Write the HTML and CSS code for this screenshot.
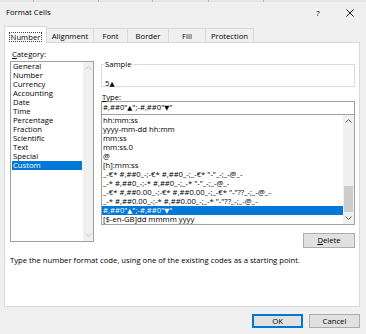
FILE: index.html
```html
<!DOCTYPE html>
<html lang="en">
<head>
  <meta charset="UTF-8">
  <meta name="viewport" content="width=device-width, initial-scale=1.0">
  <title>Format Cells</title>
  <link rel="stylesheet" href="styles.css">
</head>
<body>

<div class="strip"></div>

<div class="titlebar">
  <span class="title">Format Cells</span>
  <span class="help">?</span>
  <span class="close">
    <svg width="8" height="8" viewBox="0 0 8 8"><path d="M0.5 0.5L7.5 7.5M7.5 0.5L0.5 7.5" stroke="#000" stroke-width="0.9" fill="none"/></svg>
  </span>
</div>

<!-- Tabs -->
<div class="tabs">
  <div class="tab tab-active"><span class="focus">Number</span></div>
  <div class="tab tab-align">Alignment</div>
  <div class="tab tab-font">Font</div>
  <div class="tab tab-border">Border</div>
  <div class="tab tab-fill">Fill</div>
  <div class="tab tab-prot">Protection</div>
</div>

<div class="panel">
  <div class="panel-cols">

    <!-- Category list -->
    <div class="col-left">
      <div class="label"><u>C</u>ategory:</div>
      <div class="listbox listbox-cat">
        <ul class="items">
          <li>General</li>
          <li>Number</li>
          <li>Currency</li>
          <li>Accounting</li>
          <li>Date</li>
          <li>Time</li>
          <li>Percentage</li>
          <li>Fraction</li>
          <li>Scientific</li>
          <li>Text</li>
          <li>Special</li>
          <li class="selected">Custom</li>
        </ul>
        <div class="vscroll vscroll-off">
          <div class="arrow"><svg width="7" height="4" viewBox="0 0 7 4"><path d="M0.5 3.5L3.5 0.5L6.5 3.5" fill="none" stroke="#c4c4c4"/></svg></div>
          <div class="track"></div>
          <div class="arrow"><svg width="7" height="4" viewBox="0 0 7 4"><path d="M0.5 0.5L3.5 3.5L6.5 0.5" fill="none" stroke="#c4c4c4"/></svg></div>
        </div>
      </div>
    </div>

    <!-- Sample, type and format list -->
    <div class="col-right">
      <div class="sample">
        <span class="legend">Sample</span>
        <div class="sample-val">5<span class="tri">▲</span></div>
      </div>

      <div class="label label-type"><u>T</u>ype:</div>
      <div class="typebox">#,##0"<span class="tri">▲</span>";-#,##0"<span class="tri">▼</span>"</div>

      <div class="listbox listbox-fmt">
        <ul class="items">
          <li>hh:mm:ss</li>
          <li>yyyy-mm-dd hh:mm</li>
          <li>mm:ss</li>
          <li>mm:ss.0</li>
          <li>@</li>
          <li>[h]:mm:ss</li>
          <li>_-€* #,##0_-;-€* #,##0_-;_-€* "-"_-;_-@_-</li>
          <li>_-* #,##0_-;-* #,##0_-;_-* "-"_-;_-@_-</li>
          <li>_-€* #,##0.00_-;-€* #,##0.00_-;_-€* "-"??_-;_-@_-</li>
          <li>_-* #,##0.00_-;-* #,##0.00_-;_-* "-"??_-;_-@_-</li>
          <li class="selected">#,##0"<span class="tri">▲</span>";-#,##0"<span class="tri">▼</span>"</li>
          <li>[$-en-GB]dd mmmm yyyy</li>
        </ul>
        <div class="vscroll">
          <div class="arrow"><svg width="7" height="4" viewBox="0 0 7 4"><path d="M0.5 3.5L3.5 0.5L6.5 3.5" fill="none" stroke="#606060"/></svg></div>
          <div class="track"><div class="thumb"></div></div>
          <div class="arrow"><svg width="7" height="4" viewBox="0 0 7 4"><path d="M0.5 0.5L3.5 3.5L6.5 0.5" fill="none" stroke="#606060"/></svg></div>
        </div>
      </div>

      <div class="row-end">
        <button class="btn btn-delete"><u>D</u>elete</button>
      </div>
    </div>

  </div>

  <p class="hint">Type the number format code, using one of the existing codes as a starting point.</p>
</div>

<div class="footer">
  <button class="btn btn-default">OK</button>
  <button class="btn">Cancel</button>
</div>

</body>
</html>
```

FILE: styles.css
```css
* {
  box-sizing: border-box;
}
body {
  margin: 0;
  width: 366px;
  height: 334px;
  overflow: hidden;
  background-color: #f0f0f0;
  font-family: "Open Sans", "DejaVu Sans", sans-serif;
  font-size: 7.7px;
  line-height: 9px;
  color: #000;
}
u {
  text-decoration: underline;
  text-underline-offset: 1px;
}
.tri {
  font-size: 6.5px;
}

/* sheet behind the dialog, peeking at the top */
.strip {
  height: 2px;
  background:
    linear-gradient(#b8b8b8, #b8b8b8) 33px 0 / 1px 2px no-repeat,
    linear-gradient(#b8b8b8, #b8b8b8) 98px 0 / 1px 2px no-repeat,
    linear-gradient(#b8b8b8, #b8b8b8) 152px 0 / 1px 2px no-repeat,
    linear-gradient(#b8b8b8, #b8b8b8) 208px 0 / 1px 2px no-repeat,
    linear-gradient(#b8b8b8, #b8b8b8) 263px 0 / 1px 2px no-repeat,
    #e6e6e6;
}

.titlebar {
  display: flex;
  align-items: center;
  height: 24px;
  padding: 0 9px 3px 6px;
}
.title {
  flex: 1;
}
.help {
  width: 14px;
  text-align: center;
  font-size: 8px;
}
.close {
  width: 14px;
  margin-left: 18px;
  display: flex;
  justify-content: center;
}

/* tabs */
.tabs {
  display: flex;
  align-items: flex-end;
  height: 17px;
  margin: 0 0 -1px 4px;
  position: relative;
  z-index: 1;
}
.tab {
  height: 15px;
  margin-left: -1px;
  border: 1px solid #d9d9d9;
  background-color: #f0f0f0;
  display: flex;
  justify-content: center;
  align-items: flex-end;
  padding-bottom: 1px;
}
.tab-active {
  width: 43px;
  height: 17px;
  margin-left: 0;
  border-bottom: none;
  background-color: #fff;
  padding-bottom: 1px;
}
.focus {
  border: 1px dotted #444;
  line-height: 8px;
  padding: 0 1px;
}
.tab-align { width: 48px; }
.tab-font { width: 35px; }
.tab-border { width: 42px; }
.tab-fill { width: 38px; }
.tab-prot { width: 49px; }

/* page */
.panel {
  height: 265px;
  margin: 0 6px 0 4px;
  background-color: #fff;
  border: 1px solid #d9d9d9;
}
.panel-cols {
  display: flex;
  padding: 7px 0 0 5px;
}
.col-left {
  width: 84px;
}
.col-right {
  width: 254px;
  margin-left: 7px;
}
.label {
  height: 9px;
  padding-left: 2px;
}

.listbox {
  display: flex;
  border: 1px solid #a0a0a0;
  background-color: #fff;
}
.listbox-cat {
  height: 181px;
  margin-top: 2px;
}
.listbox-fmt {
  height: 111px;
  margin-top: -1px;
}
.items {
  flex: 1;
  list-style: none;
  margin: 0;
  padding: 0 0 0 1px;
  white-space: nowrap;
  overflow: hidden;
}
.listbox-cat .items {
  padding: 0 1px;
}
.listbox-fmt .items {
  padding: 1px 0 0 0;
}
.items li {
  height: 9px;
  padding-left: 1px;
}
.items li.selected {
  background-color: #0078d7;
  color: #fff;
}

.vscroll {
  width: 10px;
  display: flex;
  flex-direction: column;
  background-color: #f0f0f0;
}
.listbox-fmt .vscroll {
  width: 11px;
}
.vscroll .arrow {
  height: 12px;
  display: flex;
  align-items: center;
  justify-content: center;
}
.vscroll .track {
  flex: 1;
  display: flex;
  flex-direction: column;
  justify-content: flex-end;
  padding: 0 1px;
}
.thumb {
  height: 26px;
  background-color: #cdcdcd;
}

.sample {
  height: 23px;
  margin-top: 14px;
  border: 1px solid #dcdcdc;
}
.legend {
  display: inline-block;
  margin: -5px 0 0 2px;
  padding: 0 1px;
  background-color: #fff;
  vertical-align: top;
}
.sample-val {
  margin-top: 5px;
  padding-left: 3px;
}
.label-type {
  height: 8px;
  margin-top: 6px;
  padding-left: 1px;
}
.typebox {
  height: 14px;
  border: 1px solid #a0a0a0;
  padding: 1px 0 0 1px;
  white-space: nowrap;
}

.row-end {
  display: flex;
  justify-content: flex-end;
  margin-top: 8px;
}
.btn {
  height: 14px;
  width: 51px;
  padding: 0;
  border: 1px solid #adadad;
  background-color: #e1e1e1;
  font-family: inherit;
  font-size: 7.7px;
  line-height: 9px;
  color: #000;
}
.btn-delete {
  width: 52px;
  height: 15px;
}
.btn-default {
  border-color: #0078d7;
  box-shadow: inset 0 0 0 1px #0078d7;
}

.hint {
  margin: 8px 0 0 0;
  padding-left: 5px;
}

.footer {
  display: flex;
  justify-content: flex-end;
  gap: 6px;
  margin-top: 7px;
  padding-right: 6px;
}
```
